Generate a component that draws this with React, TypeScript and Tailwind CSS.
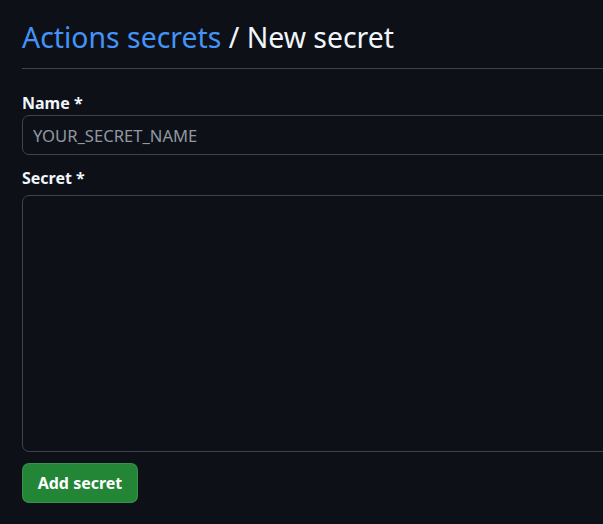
import React from "react";

export default function App() {
  return (
    <div
      className="min-h-[524px] w-[603px] overflow-hidden bg-[#0d1117] text-[#f0f6fc]"
      style={{ fontFamily: '"Noto Sans", "Open Sans", sans-serif' }}
    >
      <div className="w-[760px] pl-[22px] pt-[18px]">
        {/* Subhead */}
        <div className="border-b border-[#3d444d] pb-[12px]">
          <h2 className="text-[28.4px] font-normal leading-[38px]">
            <a href="#" className="text-[#4493f8]">
              Actions secrets
            </a>{" "}
            / New secret
          </h2>
        </div>

        <form className="pt-[23px]">
          <label className="block text-[16px] font-bold leading-[22px]">Name *</label>
          <input
            type="text"
            placeholder="YOUR_SECRET_NAME"
            className="mt-[1px] block h-[40px] w-full rounded-[7px] border border-[#3d444d] bg-[#0d1117] px-[10px] text-[16.6px] placeholder:text-[#9198a1] outline-none"
          />

          <label className="mt-[12px] block text-[16px] font-bold leading-[22px]">Secret *</label>
          <textarea className="mt-[6px] block h-[257px] w-full resize-none rounded-[7px] border border-[#3d444d] bg-[#0d1117] outline-none" />

          <button
            type="button"
            className="mt-[11px] h-[40px] w-[116px] rounded-[7px] border border-[#ffffff1a] bg-[#238636] text-[16px] font-bold text-white"
          >
            Add secret
          </button>
        </form>
      </div>
    </div>
  );
}
